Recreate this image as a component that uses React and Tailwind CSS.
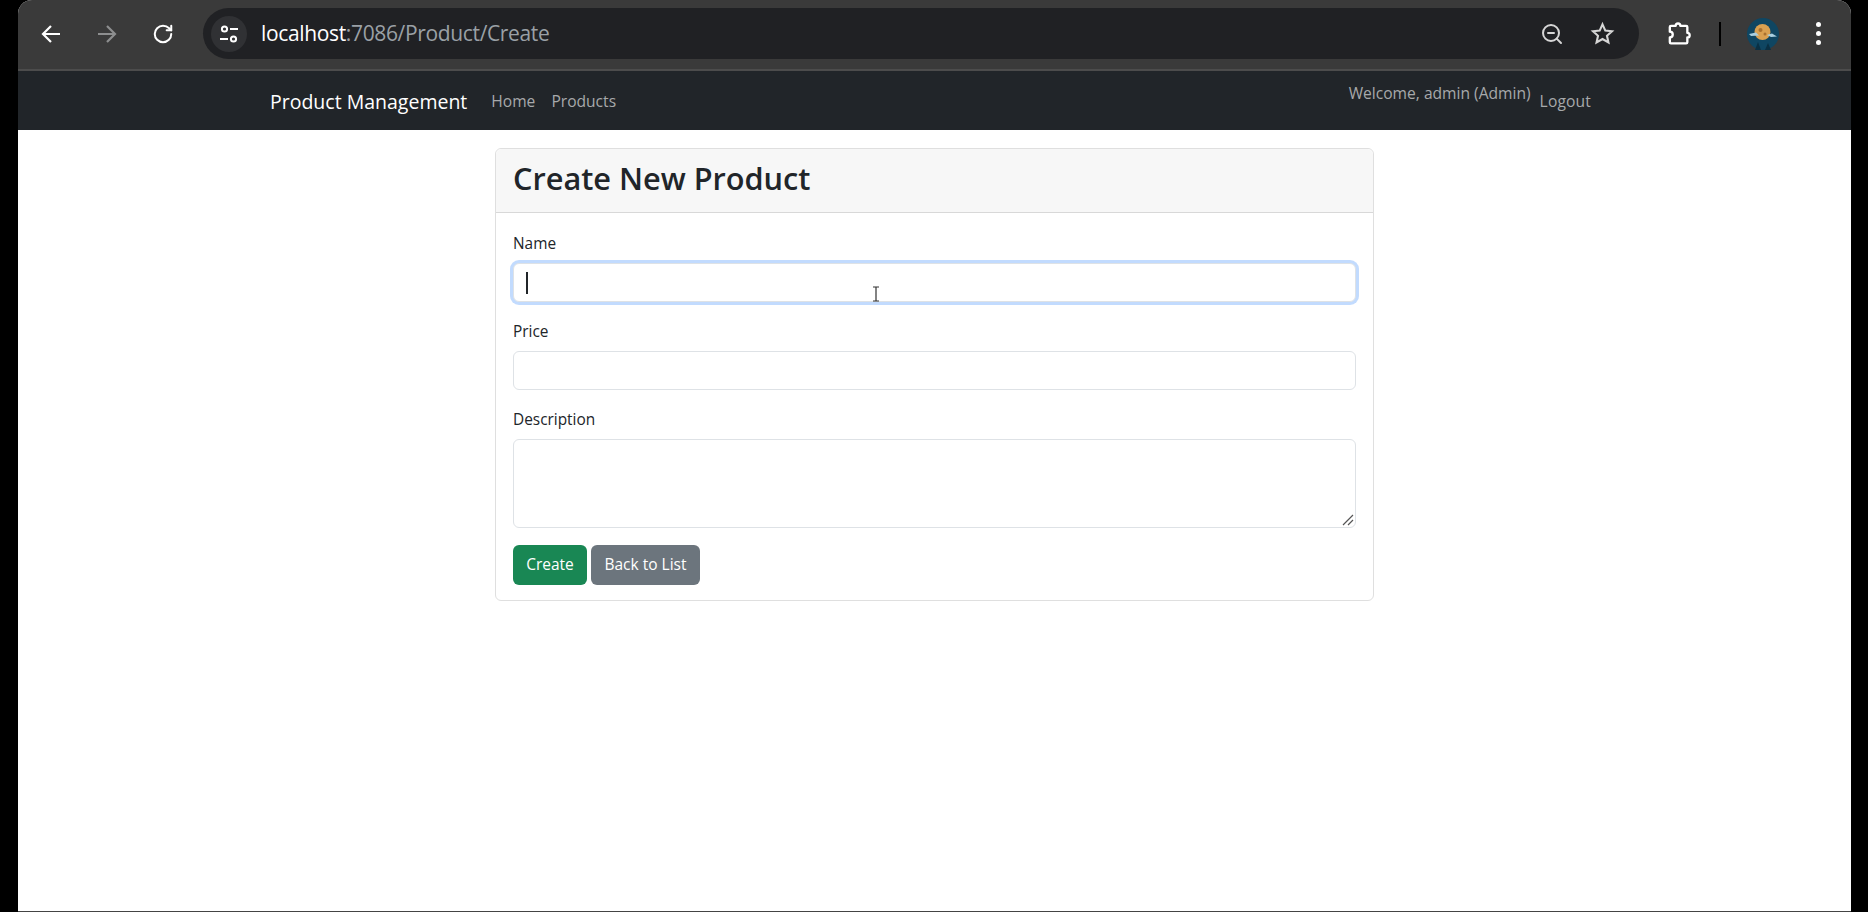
import React from "react";
import { RotateCw, ZoomOut } from "lucide-react";

const Field = ({ label, children }) => (
  <div className="mb-[17px]">
    <label className="block h-6 mb-2 text-[15.4px] leading-[26px] text-[#212529]">{label}</label>
    {children}
  </div>
);

const inputClass =
  "block w-full h-[39px] rounded-md border border-[#dee2e6] bg-white outline-none";

const Avatar = () => (
  <svg width="32" height="32" viewBox="0 0 32 32">
    <circle cx="16" cy="16" r="16" fill="#0f4662" />
    <path d="M8 32l3-8 3 8zM18 32l3-7 3 7z" fill="#0a3044" />
    <circle cx="15.5" cy="14" r="8" fill="#d9a050" />
    <circle cx="13.5" cy="12" r="2" fill="#a8702f" />
    <circle cx="18" cy="16" r="1.5" fill="#a8702f" />
    <path d="M2 16l7-1.5 3 3-8 .5zM20 17l5-1.5 5 3-6 .5z" fill="#a9cfe0" />
  </svg>
);

const NavArrow = ({ d }) => (
  <svg width="24" height="24" viewBox="0 0 24 24" fill="none" stroke="currentColor" strokeWidth="2.2">
    <path d={d} />
  </svg>
);

export default function App() {
  return (
    <div className="h-[912px] overflow-hidden bg-black pl-[18px] pr-[17px] font-['Open_Sans',sans-serif]">
      <div className="flex h-full flex-col rounded-t-[14px] bg-white border-b border-[#444]">
        {/* browser toolbar */}
        <div className="flex h-[69px] shrink-0 items-start rounded-t-[14px] bg-[#3a3a3a] pl-[5px] pt-[8px]">
          <div className="flex h-[51px] w-[56px] items-center justify-center text-white">
            <NavArrow d="M21 12H4M12 4l-8 8 8 8" />
          </div>
          <div className="flex h-[51px] w-[56px] items-center justify-center text-[#8d8e8f]">
            <NavArrow d="M3 12h17M12 4l8 8-8 8" />
          </div>
          <div className="flex h-[51px] w-[56px] items-center justify-center text-white">
            <RotateCw size={22} strokeWidth={2.2} />
          </div>
          <div className="ml-[12px] flex h-[51px] flex-1 items-center rounded-full bg-[#202124] pl-[8px] pr-[24px]">
            <div className="flex h-9 w-9 items-center justify-center rounded-full bg-[#303134]">
              <svg width="22" height="22" viewBox="0 0 22 22" fill="none" stroke="#fff" strokeWidth="2">
                <circle cx="6.5" cy="6" r="2.6" />
                <path d="M12 6h8M2 16h8" />
                <circle cx="15.5" cy="16" r="2.6" />
              </svg>
            </div>
            <div className="ml-[14px] text-[21px] tracking-[-0.35px] text-[#9aa0a6]">
              <span className="text-white">localhost</span>:7086/Product/Create
            </div>
            <div className="ml-auto flex items-center gap-[26px] text-[#d6d6d6]">
              <ZoomOut size={24} strokeWidth={2} />
              <svg width="25" height="25" viewBox="0 0 24 24" fill="none" stroke="currentColor" strokeWidth="2">
                <path d="M12 3.2l2.7 6 6.4.7-4.8 4.3 1.4 6.4L12 17.3l-5.7 3.3 1.4-6.4-4.8-4.3 6.4-.7z" />
              </svg>
            </div>
          </div>
          <div className="flex h-[51px] w-[212px] shrink-0 items-center pl-[25px]">
            <svg width="28" height="28" viewBox="0 0 24 24" fill="none" stroke="#fff" strokeWidth="2" strokeLinejoin="round">
              <path d="M6 5h4a2 2 0 0 1 4 0h5a1 1 0 0 1 1 1v5a2 2 0 0 1 0 4v4a1 1 0 0 1-1 1H6a1 1 0 0 1-1-1v-4a2.5 2.5 0 0 0 0-5V6a1 1 0 0 1 1-1z" />
            </svg>
            <div className="ml-[27px] h-6 w-[2px] bg-black" />
            <div className="ml-[26px]">
              <Avatar />
            </div>
            <div className="ml-[37px] flex flex-col gap-[4px]">
              <span className="h-[5px] w-[5px] rounded-full bg-white" />
              <span className="h-[5px] w-[5px] rounded-full bg-white" />
              <span className="h-[5px] w-[5px] rounded-full bg-white" />
            </div>
          </div>
        </div>
        <div className="h-[2px] shrink-0 bg-[#4c4c4c]" />

        {/* app navbar */}
        <nav className="flex h-[59px] shrink-0 items-center bg-[#212529] pl-[252px] pr-[260px] pt-[3px] text-[15.6px] text-[#a7a9ab]">
          <span className="mr-[24px] text-[19.5px] text-white">Product Management</span>
          <a className="mr-[16px]">Home</a>
          <a>Products</a>
          <span className="ml-auto mb-[16px] mr-[9px]">Welcome, admin (Admin)</span>
          <a className="tracking-[0.15px]">Logout</a>
        </nav>

        {/* form card */}
        <main className="flex-1 pt-[18px]">
          <div className="relative mx-auto w-[879px] rounded-md border border-[#dfdfdf]">
            <div className="flex h-[64px] items-center rounded-t-md border-b border-[#d8d8d8] bg-[#f7f7f7] pb-[4px] pl-[17px]">
              <h1 className="text-[30.7px] font-semibold text-[#212529]">Create New Product</h1>
            </div>
            <div className="px-[17px] pb-[15px] pt-[18px]">
              <Field label="Name">
                <div className="relative">
                  <input className={`${inputClass} border-[#86b7fe] shadow-[0_0_0_3px_rgba(13,110,253,0.25)]`} readOnly />
                  <span className="absolute left-[13px] top-[9px] h-[22px] w-[2px] bg-[#212529]" />
                  <svg className="absolute left-[358px] top-[23px]" width="10" height="16" viewBox="0 0 10 16" fill="none" stroke="#333" strokeWidth="1.2">
                    <path d="M2 1h6M2 15h6M5 1v14" />
                  </svg>
                </div>
              </Field>
              <Field label="Price">
                <input className={inputClass} readOnly />
              </Field>
              <Field label="Description">
                <div className="relative">
                  <textarea className={`${inputClass} h-[89px] resize-none`} readOnly />
                  <svg className="absolute bottom-[2px] right-[2px]" width="12" height="12" viewBox="0 0 12 12" fill="none" stroke="#555" strokeWidth="1.2">
                    <path d="M1 11L11 1M6 11l5-5" />
                  </svg>
                </div>
              </Field>
              <div className="flex gap-1 text-[15.5px] text-white">
                <button className="h-10 w-[74px] rounded-md bg-[#198754]">Create</button>
                <button className="h-10 w-[109px] rounded-md bg-[#6c757d]">Back to List</button>
              </div>
            </div>
          </div>
        </main>
      </div>
    </div>
  );
}
